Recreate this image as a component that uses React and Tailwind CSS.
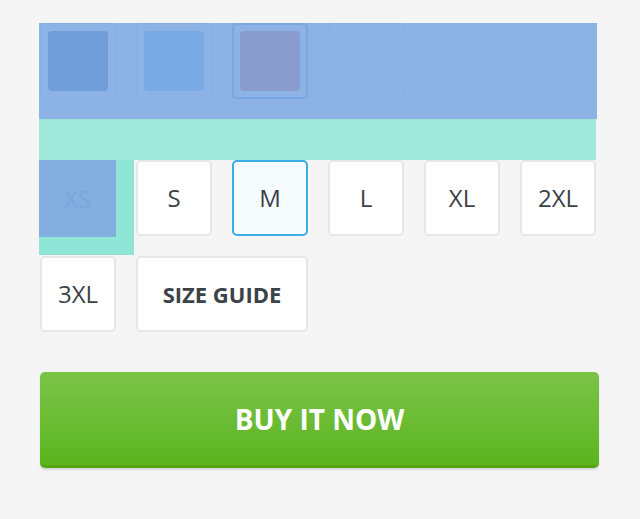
import React from "react";

const font = { fontFamily: '"Open Sans", "Liberation Sans", sans-serif' };

function SizeBtn({ label, selected }) {
  return (
    <div
      className={
        "w-[76px] h-[76px] rounded-[5px] flex items-center justify-center text-[24px] text-[#3b4248] " +
        (selected
          ? "border-2 border-[#3aaee6] bg-[#f6fbfe]"
          : "border-2 border-[#e5e8eb] bg-white")
      }
    >
      {label}
    </div>
  );
}

export default function App() {
  return (
    <div className="min-h-screen w-[640px] bg-[#f4f5f4] pt-[23px] pl-[39px]" style={font}>
      {/* swatches (highlighted) */}
      <div className="w-[558px] h-[96px] bg-[#8db2e6] flex gap-[20px] pl-[1px]">
        <div className="w-[76px] h-[76px] rounded-[4px] border border-[#88aee4] flex items-center justify-center">
          <div className="w-[60px] h-[60px] rounded-[4px] bg-[#6f9edb]" />
        </div>
        <div className="w-[76px] h-[76px] rounded-[4px] border border-[#88aee4] flex items-center justify-center">
          <div className="w-[60px] h-[60px] rounded-[4px] bg-[#79aae5]" />
        </div>
        <div className="w-[76px] h-[76px] rounded-[4px] border-2 border-[#7aa9e2] flex items-center justify-center">
          <div className="w-[60px] h-[60px] rounded-[4px] bg-[#8a9bcd]" />
        </div>
        <div className="w-[76px] h-[76px] rounded-[4px] border border-[#8aafe4] flex items-center justify-center">
          <div className="w-[60px] h-[60px] rounded-[4px] border border-[#8bb0e5]" />
        </div>
      </div>
      <div className="w-[557px] h-[41px] bg-[#9de8d9]" />

      {/* sizes row 1 */}
      <div className="flex items-start h-[96px]">
        <div className="w-[95px] h-[95px] bg-[#8fe6d6] mr-[2px]">
          <div className="w-[77px] h-[77px] bg-[#82aee0] flex items-center justify-center text-[24px] text-[#7aa7da]">
            XS
          </div>
        </div>
        <div className="flex gap-[20px]">
          <SizeBtn label="S" />
          <SizeBtn label="M" selected />
          <SizeBtn label="L" />
          <SizeBtn label="XL" />
          <SizeBtn label="2XL" />
        </div>
      </div>

      {/* sizes row 2 */}
      <div className="flex gap-[20px] pl-[1px]">
        <SizeBtn label="3XL" />
        <div className="w-[172px] h-[76px] rounded-[5px] border-2 border-[#e5e8eb] bg-white flex items-center justify-center text-[22px] font-bold text-[#3b4248]">
          SIZE GUIDE
        </div>
      </div>

      {/* buy button */}
      <div className="mt-[40px] pl-[1px]">
        <div className="w-[559px] h-[96px] rounded-[5px] bg-gradient-to-b from-[#7bc347] to-[#5bb51b] border-b-[3px] border-[#55a418] shadow-[0_2px_2px_rgba(0,0,0,0.12)] flex items-center justify-center text-white font-bold text-[28px]">
          BUY IT NOW
        </div>
      </div>
    </div>
  );
}
